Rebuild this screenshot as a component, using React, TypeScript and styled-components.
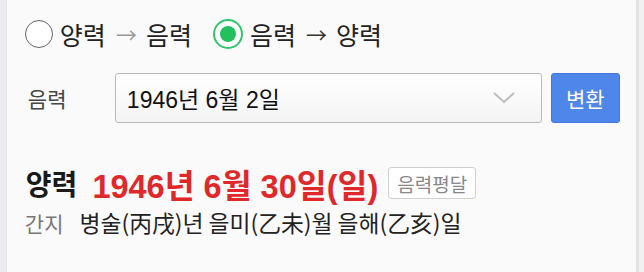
import React from "react";
import styled, { createGlobalStyle } from "styled-components";

const GlobalStyle = createGlobalStyle`
  html, body {
    margin: 0;
    padding: 0;
    background: #f2f2f4;
  }
  body {
    font-family: "Noto Sans CJK KR", "Noto Sans", sans-serif;
  }
`;

const Page = styled.div`
  display: flex;
  width: 644px;
  height: 272px;
  overflow: hidden;
`;

const LeftGutter = styled.div`
  width: 8px;
  background: #ececf0;
  border-right: 1px solid #e4e4e8;
`;

const RightGutter = styled.div`
  width: 7px;
  background: #f1f1f1;
  border-left: 3px solid #e2e2e2;
`;

const Panel = styled.div`
  flex: 1;
  background: #fafafa;
  padding: 17px 16px 0 18px;
  display: flex;
  flex-direction: column;
`;

const ModeRow = styled.div`
  display: flex;
  align-items: center;
  gap: 21px;
  height: 34px;
`;

const RadioOption = styled.label`
  display: flex;
  align-items: center;
  gap: 7px;
  font-size: 25px;
  color: #222;
  line-height: 1;
`;

const RadioCircle = styled.span<{ $checked?: boolean }>`
  box-sizing: border-box;
  width: ${p => (p.$checked ? 30 : 28)}px;
  height: ${p => (p.$checked ? 30 : 28)}px;
  border-radius: 50%;
  border: ${p => (p.$checked ? "2px solid #2ec76a" : "1.5px solid #666")};
  background: #fff;
  display: flex;
  align-items: center;
  justify-content: center;
  &::after {
    content: "";
    display: ${p => (p.$checked ? "block" : "none")};
    width: 16px;
    height: 16px;
    border-radius: 50%;
    background: #22c15e;
  }
`;

const Arrow = styled.span<{ $muted?: boolean }>`
  color: ${p => (p.$muted ? "#999" : "#333")};
  font-size: 21px;
  margin: 0 2px 0 3px;
`;

const InputRow = styled.div`
  display: flex;
  align-items: center;
  margin-top: 22px;
  height: 50px;
`;

const FieldLabel = styled.span`
  width: 87px;
  font-size: 21px;
  color: #444;
  padding-left: 3px;
`;

const DateSelect = styled.div`
  box-sizing: border-box;
  width: 427px;
  height: 50px;
  border: 1px solid #b9b9b9;
  border-radius: 3px;
  background: linear-gradient(#ffffff, #f4f4f4);
  display: flex;
  align-items: center;
  justify-content: space-between;
  padding: 0 26px 0 11px;
  font-family: "Liberation Sans", "Noto Sans CJK KR", sans-serif;
  font-size: 23px;
  color: #111;
`;

const ConvertButton = styled.button`
  box-sizing: border-box;
  margin-left: 9px;
  width: 69px;
  height: 50px;
  border: 1px solid #4477dd;
  border-radius: 3px;
  background: #4f86ea;
  color: #fff;
  font-family: "Noto Sans CJK KR", sans-serif;
  font-size: 21px;
  padding: 0;
`;

const ResultRow = styled.div`
  display: flex;
  align-items: center;
  margin-top: 40px;
  gap: 10px;
  height: 40px;
`;

const ResultLabel = styled.span`
  font-size: 28px;
  font-weight: 700;
  color: #1a1a1a;
  margin-left: 1px;
  margin-right: 5px;
`;

const ResultDate = styled.span`
  font-family: "Liberation Sans", "Noto Sans CJK KR", sans-serif;
  font-size: 32.5px;
  font-weight: 700;
  color: #e0282a;
`;

const Badge = styled.span`
  box-sizing: border-box;
  height: 32px;
  padding: 0 8px;
  border: 1px solid #d0d0d0;
  border-radius: 3px;
  background: #fff;
  color: #888;
  font-size: 19px;
  display: flex;
  align-items: center;
`;

const GanjiRow = styled.div`
  display: flex;
  align-items: center;
  margin-top: 3px;
  gap: 16px;
`;

const GanjiLabel = styled.span`
  color: #777;
  font-size: 21px;
`;

const GanjiText = styled.span`
  color: #222;
  font-size: 22.8px;
`;

const Chevron = () => (
  <svg width="22" height="12" viewBox="0 0 22 12">
    <path d="M1 1 L11 10 L21 1" fill="none" stroke="#bdbdbd" strokeWidth="2" />
  </svg>
);

export default function App() {
  return (
    <>
      <GlobalStyle />
      <Page>
        <LeftGutter />
        <Panel>
          <ModeRow>
            <RadioOption>
              <RadioCircle />
              양력<Arrow $muted>→</Arrow>음력
            </RadioOption>
            <RadioOption>
              <RadioCircle $checked />
              음력<Arrow>→</Arrow>양력
            </RadioOption>
          </ModeRow>
          <InputRow>
            <FieldLabel>음력</FieldLabel>
            <DateSelect>
              1946년 6월 2일
              <Chevron />
            </DateSelect>
            <ConvertButton>변환</ConvertButton>
          </InputRow>
          <ResultRow>
            <ResultLabel>양력</ResultLabel>
            <ResultDate>1946년 6월 30일(일)</ResultDate>
            <Badge>음력평달</Badge>
          </ResultRow>
          <GanjiRow>
            <GanjiLabel>간지</GanjiLabel>
            <GanjiText>병술(丙戌)년 을미(乙未)월 을해(乙亥)일</GanjiText>
          </GanjiRow>
        </Panel>
        <RightGutter />
      </Page>
    </>
  );
}
